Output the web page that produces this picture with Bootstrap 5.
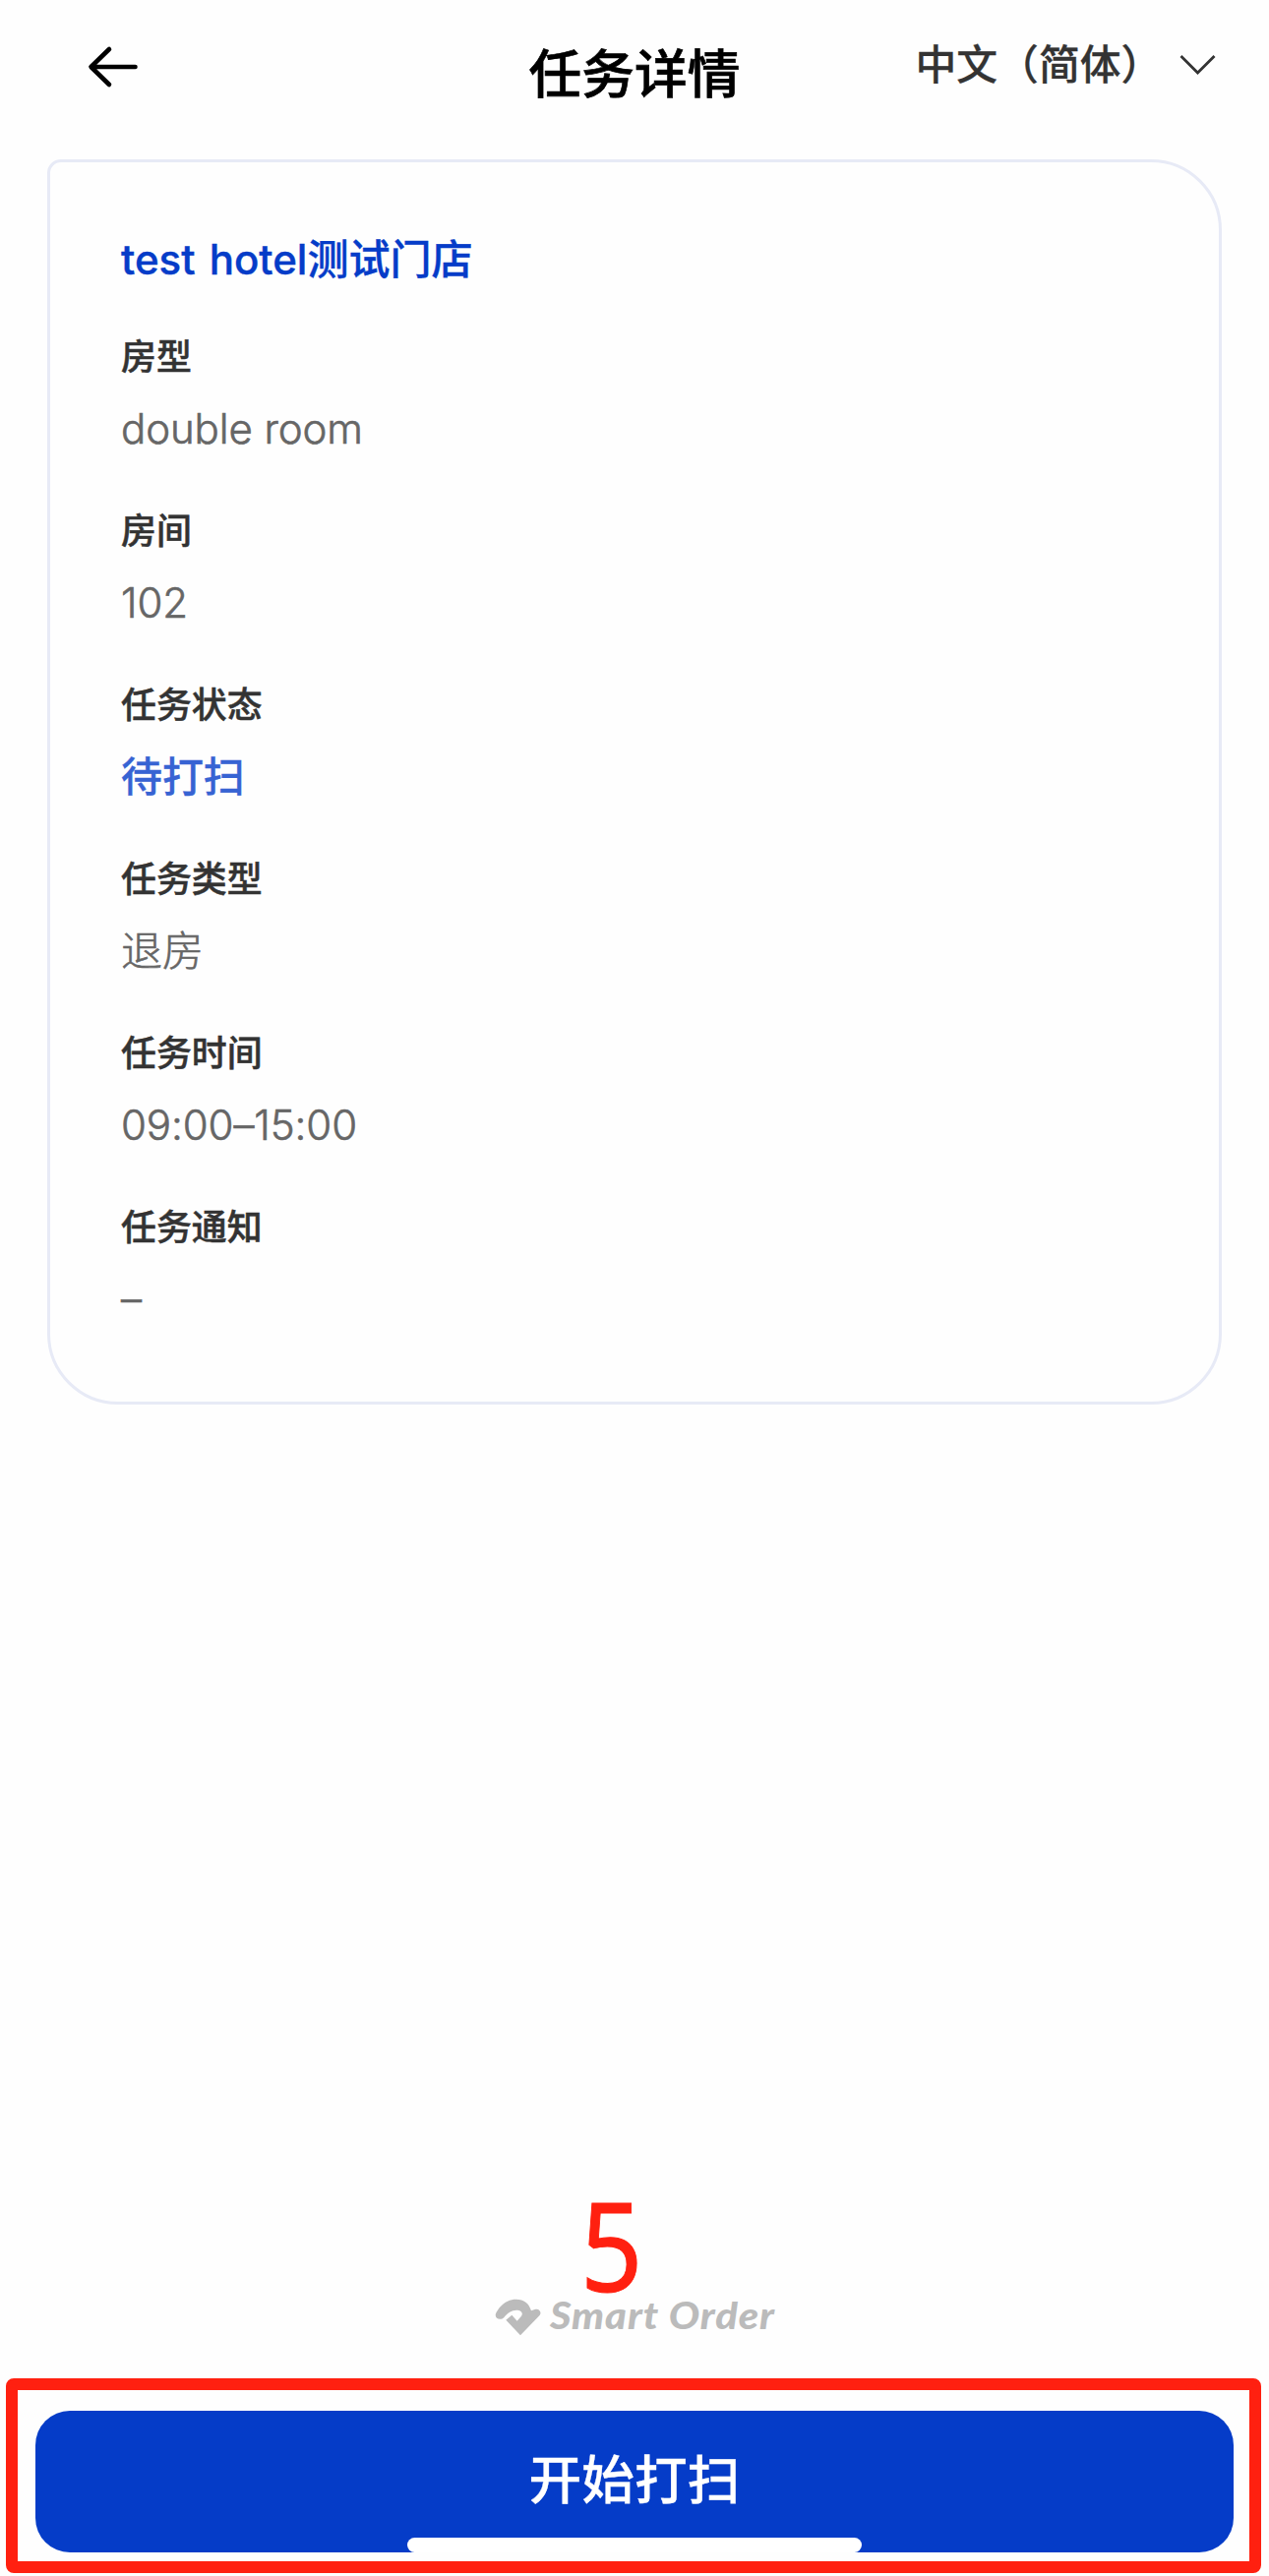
<!DOCTYPE html>
<html lang="zh-CN">
<head>
<meta charset="utf-8">
<meta name="viewport" content="width=device-width, initial-scale=1">
<title>任务详情</title>
<link href="https://cdn.jsdelivr.net/npm/bootstrap@5.3.0/dist/css/bootstrap.min.css" rel="stylesheet">
<style>
body{font-family:"Inter","Noto Sans CJK SC",sans-serif;color:#333;background:#fefefe}
.screen{height:2619px;overflow:hidden}
.topbar{height:162px;font-family:"Noto Sans CJK SC",sans-serif;font-weight:500}
.back-btn{padding:45px 0 0 87px}
.page-title{font-size:53.7px;line-height:60px;padding-top:42px;font-weight:500;color:#000;-webkit-text-stroke:.7px #000}
.lang-btn{font-size:41.8px;line-height:60px;padding:33px 52px 0 70.5px;font-weight:500;-webkit-text-stroke:.3px #333}
.lang-btn svg{margin-top:22px}
.task-card{margin:0 48px;height:1266px;border:3px solid #e7eaf6;border-radius:14px 72px 72px 72px;padding:69px 72px 0;background:#fefefe}
.hotel-name{font-size:42px;line-height:60px;font-weight:500;color:#053cc8;margin-bottom:44px;word-spacing:3px;-webkit-text-stroke:.4px #053cc8}
.task-item{height:177px}
.task-label{font-size:35.9px;line-height:50px;font-weight:500;margin-bottom:17.5px;-webkit-text-stroke:.5px #333}
.task-value{font-size:42px;line-height:60px;font-weight:300;color:#666;margin:0;letter-spacing:-.1px;-webkit-text-stroke:.6px #666}
.state-todo{color:#3763d3;font-weight:500;-webkit-text-stroke:.3px #3763d3}
.brand-line{height:40px;margin-bottom:42px;padding-left:503px;color:#bbb}
.brand-text{font:italic 900 37.5px/34px Lato,sans-serif;letter-spacing:.8px;transform:scaleX(1.11);transform-origin:0 50%;margin:-4px 0 0 8px}
.step-no{left:590px;top:2235px;font:126px/92px "Noto Sans",sans-serif;color:#ff2010;-webkit-text-stroke:1px #ff2010;transform:scaleX(.88);transform-origin:0 50%}
.frame{margin:0 8px 3px 6px;height:198px;border:12px solid #ff2010;border-radius:8px;padding:21px 16px 0 18px}
.start-btn{height:144px;border:0;border-radius:35px;background:#053cc8;color:#fff;font:500 53.7px/60px "Noto Sans CJK SC",sans-serif;padding:0 0 10px;-webkit-text-stroke:.3px #fff}
.home-bar{width:462px;height:15px;border-radius:8px;background:#fff;bottom:0;left:378px}
</style>
<script src="https://cdn.jsdelivr.net/npm/bootstrap@5.3.0/dist/js/bootstrap.bundle.min.js"></script>
</head>
<body>
<div class="screen d-flex flex-column position-relative">
  <header class="topbar row g-0">
    <div class="col-4 back-btn">
      <svg class="d-block" width="56" height="46" viewBox="0 0 56 46" fill="none" stroke="#000" stroke-width="4.6" stroke-linecap="round" stroke-linejoin="round"><path d="M24 5 5.500 23 24 41M6 23H50.500"/></svg>
    </div>
    <h1 class="col-4 page-title text-center mb-0">任务详情</h1>
    <div class="col-4 lang-btn d-flex justify-content-between">
      <span class="text-nowrap">中文（简体）</span>
      <svg width="40" height="24" viewBox="0 0 40 24" fill="none" stroke="#333" stroke-width="2.8"><path d="M2.500 2 19.500 19 36.500 2"/></svg>
    </div>
  </header>
  <main class="task-card">
    <h2 class="hotel-name">test hotel测试门店</h2>
    <div class="task-item"><div class="task-label">房型</div><p class="task-value">double room</p></div>
    <div class="task-item"><div class="task-label">房间</div><p class="task-value">102</p></div>
    <div class="task-item"><div class="task-label">任务状态</div><p class="task-value state-todo">待打扫</p></div>
    <div class="task-item"><div class="task-label">任务类型</div><p class="task-value">退房</p></div>
    <div class="task-item"><div class="task-label">任务时间</div><p class="task-value">09:00–15:00</p></div>
    <div class="task-item"><div class="task-label">任务通知</div><p class="task-value">–</p></div>
  </main>
  <footer class="mt-auto">
    <div class="brand-line d-flex align-items-center">
      <svg width="48" height="39" viewBox="70 378 144 117" fill="#bbb"><path d="M75 419C92 391 113 380 135 380C159 380 174 392 181 415L192 411C205 406 215 420 206 430L148 490L104 443L122 428L138 446L151 431C158 421 149 413 136 413C121 413 109 422 99 434C87 448 64 438 75 419Z"/></svg>
      <span class="brand-text">Smart Order</span>
    </div>
    <div class="frame">
      <button type="button" class="btn start-btn w-100 position-relative">开始打扫<span class="home-bar position-absolute"></span></button>
    </div>
  </footer>
  <div class="step-no position-absolute">5</div>
</div>
</body>
</html>
